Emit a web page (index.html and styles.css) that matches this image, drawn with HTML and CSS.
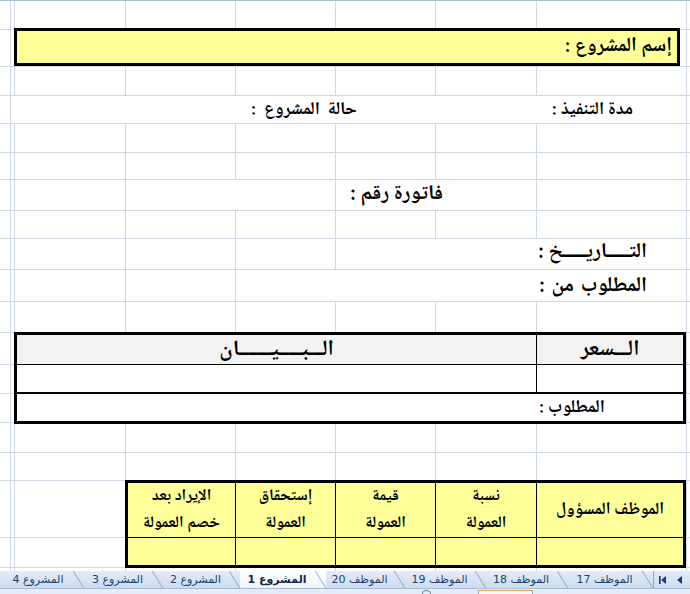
FILE: index.html
```html
<!DOCTYPE html>
<html lang="ar" dir="rtl">
<head>
<meta charset="utf-8">
<title>فاتورة المشروع</title>
<link rel="stylesheet" href="styles.css">
</head>
<body>
<div class="window">
  <div class="sheet">
    <!-- r1 -->
    <div class="row h29"><div class="c"></div><div class="c"></div><div class="c"></div><div class="c"></div><div class="c"></div><div class="c"></div><div class="c"></div><div class="c"></div><div class="c ch"></div></div>
    <!-- r2: project name -->
    <div class="row h37"><div class="c"></div><div class="c sp6 boxcell"><div class="titlebox">إسم المشروع :</div></div><div class="c"></div><div class="c ch"></div></div>
    <!-- r3 -->
    <div class="row h29"><div class="c"></div><div class="c"></div><div class="c"></div><div class="c"></div><div class="c"></div><div class="c"></div><div class="c"></div><div class="c"></div><div class="c ch"></div></div>
    <!-- r4 -->
    <div class="row h28"><div class="c"></div><div class="c sp6 line4"><span class="lbl l-dur">مدة التنفيذ :</span><span class="lbl l-state">حالة المشروع :</span></div><div class="c"></div><div class="c ch"></div></div>
    <!-- r5 -->
    <div class="row h29"><div class="c"></div><div class="c"></div><div class="c"></div><div class="c"></div><div class="c"></div><div class="c"></div><div class="c"></div><div class="c"></div><div class="c ch"></div></div>
    <!-- r6 -->
    <div class="row h27"><div class="c"></div><div class="c"></div><div class="c"></div><div class="c"></div><div class="c"></div><div class="c"></div><div class="c"></div><div class="c"></div><div class="c ch"></div></div>
    <!-- r7: invoice number -->
    <div class="row h31"><div class="c"></div><div class="c"></div><div class="c sp2 inv"><span class="lbl l-inv">فاتورة رقم :</span></div><div class="c sp2"></div><div class="c"></div><div class="c"></div><div class="c ch"></div></div>
    <!-- r8 -->
    <div class="row h28"><div class="c"></div><div class="c"></div><div class="c"></div><div class="c"></div><div class="c"></div><div class="c"></div><div class="c"></div><div class="c"></div><div class="c ch"></div></div>
    <!-- r9: date -->
    <div class="row h31"><div class="c"></div><div class="c sp3 side up"><span class="lbl l-big">التـــــاريـــــخ :</span></div><div class="c"></div><div class="c"></div><div class="c"></div><div class="c"></div><div class="c ch"></div></div>
    <!-- r10: requested from -->
    <div class="row h32"><div class="c"></div><div class="c sp4 side down"><span class="lbl l-big l-from">المطلوب من :</span></div><div class="c"></div><div class="c"></div><div class="c"></div><div class="c ch"></div></div>
    <!-- r11 -->
    <div class="row h31"><div class="c"></div><div class="c"></div><div class="c"></div><div class="c"></div><div class="c"></div><div class="c"></div><div class="c"></div><div class="c"></div><div class="c ch"></div></div>

    <!-- r12-r14: price / description table -->
    <div class="row grp1">
      <div class="tbl1">
        <div class="t1-head">
          <div class="k1">الـــسعر</div>
          <div class="k2">الـــبـــــيـــــــان</div>
        </div>
        <div class="t1-row"><div class="k1"></div><div class="k2"></div></div>
        <div class="t1-foot"><div class="due">المطلوب :</div></div>
      </div>
      <div class="c"></div><div class="c"></div><div class="c ch"></div>
      <div class="c"></div><div class="c"></div><div class="c ch"></div>
      <div class="c"></div><div class="c"></div><div class="c ch"></div>
    </div>

    <!-- r15 -->
    <div class="row h30"><div class="c"></div><div class="c"></div><div class="c"></div><div class="c"></div><div class="c"></div><div class="c"></div><div class="c"></div><div class="c"></div><div class="c ch"></div></div>
    <!-- r16 -->
    <div class="row h28"><div class="c"></div><div class="c"></div><div class="c"></div><div class="c"></div><div class="c"></div><div class="c"></div><div class="c"></div><div class="c"></div><div class="c ch"></div></div>

    <!-- r17-r18: commission table -->
    <div class="row grp2">
      <div class="tbl2">
        <div class="t2-head">
          <div class="hc one">الموظف المسؤول</div>
          <div class="hc"><span class="ln">نسبة</span><span class="ln">العمولة</span></div>
          <div class="hc"><span class="ln">قيمة</span><span class="ln">العمولة</span></div>
          <div class="hc"><span class="ln">إستحقاق</span><span class="ln">العمولة</span></div>
          <div class="hc"><span class="ln">الإيراد بعد</span><span class="ln">خصم العمولة</span></div>
        </div>
        <div class="t2-row">
          <div class="hc"></div><div class="hc"></div><div class="hc"></div><div class="hc"></div><div class="hc"></div>
        </div>
      </div>
      <div class="c"></div><div class="c"></div><div class="c"></div><div class="c ch"></div>
      <div class="c"></div><div class="c"></div><div class="c"></div><div class="c ch"></div>
    </div>

    <!-- r19 -->
    <div class="row h30"><div class="c"></div><div class="c"></div><div class="c"></div><div class="c"></div><div class="c"></div><div class="c"></div><div class="c"></div><div class="c"></div><div class="c ch"></div></div>
  </div>

  <div class="tabbar">
    <div class="tabrow">
      <div class="nav">
        <svg class="ic" width="5" height="8" viewBox="0 0 5 8"><path d="M5 0L0 4L5 8Z"/></svg>
        <svg class="ic" width="7" height="8" viewBox="0 0 7 8"><rect x="0" y="0" width="1.6" height="8"/><path d="M7 0L2 4L7 8Z"/></svg>
      </div>
      <div class="tab w85">الموظف 17</div>
      <div class="tab w82">الموظف 18</div>
      <div class="tab w81">الموظف 19</div>
      <div class="tab w79">الموظف 20</div>
      <div class="tab w86 active">المشروع 1</div>
      <div class="tab w77">المشروع 2</div>
      <div class="tab w79">المشروع 3</div>
      <div class="tab w80">المشروع 4</div>
    </div>
    <div class="status">
      <div class="sgap"></div>
      <div class="knob"></div>
      <div class="dot"></div>
    </div>
  </div>
</div>
</body>
</html>
```

FILE: styles.css
```css
* { box-sizing: border-box; margin: 0; padding: 0; }

html, body {
  width: 690px;
  height: 594px;
  overflow: hidden;
  background: #ffffff;
}

body {
  font-family: "Noto Naskh Arabic", "Noto Sans Arabic", "DejaVu Sans", sans-serif;
  color: #000;
}

.window {
  width: 690px;
  height: 594px;
  display: flex;
  flex-direction: column;
}

/* ---------- worksheet ---------- */
.sheet {
  height: 571px;
  flex: none;
  overflow: hidden;
  border-top: 1px solid #a9bdd8;
}

.row {
  display: grid;
  /* right to left: spare, A, B, C, D, E, F, G, H */
  grid-template-columns: 4px 150px 101px 100px 100px 110px 111px 4px 10px;
}

.h27 { height: 27px; }
.h28 { height: 28px; }
.h29 { height: 29px; }
.h30 { height: 30px; }
.h31 { height: 31px; }
.h32 { height: 32px; }
.h37 { height: 37px; }

.c {
  border-left: 1px solid #d0d7e5;
  border-bottom: 1px solid #d0d7e5;
}
.c.ch { border-left: none; }

.sp2 { grid-column: span 2; }
.sp3 { grid-column: span 3; }
.sp4 { grid-column: span 4; }
.sp6 { grid-column: span 6; }

.lbl {
  font-weight: bold;
  white-space: nowrap;
  line-height: 1;
}

/* project name box */
.boxcell { border-left: none; }
.titlebox {
  height: 38px;
  margin-top: -2px;
  margin-right: 6px;
  background: #ffff99;
  border: 3px solid #000;
  font-weight: bold;
  font-size: 20px;
  line-height: 1;
  display: flex;
  align-items: center;
  padding-right: 5px;
  white-space: nowrap;
}

/* duration / state line */
.line4 {
  border-left: none;
  display: flex;
  align-items: center;
}
.l-dur {
  width: 150px;
  padding-right: 53px;
  font-size: 18px;
}
.l-state {
  margin-right: 179px;
  font-size: 18px;
  word-spacing: 4px;
}

/* invoice number */
.inv {
  display: flex;
  align-items: center;
  padding-right: 93px;
  padding-bottom: 2px;
}
.l-inv { font-size: 21px; }

/* date / requested from */
.side {
  display: flex;
  align-items: center;
  padding-right: 39px;
}
.side.up { padding-bottom: 3px; }
.side.down { padding-top: 2px; }
.l-big { font-size: 21px; }
.l-from { word-spacing: 2px; }

/* ---------- price table ---------- */
.grp1 {
  grid-template-rows: 32px 29px 29px;
}
.tbl1 {
  grid-column: 2 / 8;
  grid-row: 1 / 4;
  align-self: start;
  height: 92px;
  margin-top: -1px;
  border: 3px solid #000;
  background: #fff;
  display: flex;
  flex-direction: column;
  position: relative;
  z-index: 1;
}
.t1-head, .t1-row, .t1-foot {
  display: grid;
  grid-template-columns: 147px 1fr;
}
.t1-head {
  height: 30px;
  background: #f2f2f2;
  border-bottom: 1px solid #000;
  font-weight: bold;
  font-size: 22px;
  line-height: 1;
}
.t1-head .k1, .t1-head .k2 {
  display: flex;
  align-items: center;
  justify-content: center;
}
.k1 { border-left: 1px solid #000; }
.t1-row {
  height: 29px;
  border-bottom: 2px solid #000;
}
.t1-foot {
  flex: 1;
}
.due {
  display: flex;
  align-items: center;
  justify-content: flex-end;
  padding-left: 3px;
  font-weight: bold;
  font-size: 18px;
  line-height: 1;
}

/* ---------- commission table ---------- */
.grp2 {
  grid-template-rows: 57px 30px;
}
.tbl2 {
  grid-column: 2 / 7;
  grid-row: 1 / 3;
  align-self: start;
  height: 88px;
  margin-top: -1px;
  border: 3px solid #000;
  background: #ffff99;
  display: flex;
  flex-direction: column;
  position: relative;
  z-index: 1;
}
.t2-head, .t2-row {
  display: grid;
  grid-template-columns: 147px 101px 100px 100px 1fr;
}
.t2-head {
  height: 55px;
  border-bottom: 1px solid #000;
}
.t2-row { flex: 1; }
.hc {
  border-left: 1px solid #000;
  display: flex;
  flex-direction: column;
  align-items: center;
  justify-content: center;
  gap: 11px;
  text-align: center;
  font-weight: bold;
  font-size: 16px;
  line-height: 1;
  white-space: nowrap;
}
.hc.one { font-size: 17px; }
.hc:last-child { border-left: none; }
.ln { display: block; }

/* ---------- sheet tabs ---------- */
.tabbar {
  flex: 1;
  display: flex;
  flex-direction: column;
  background: #d7e3f2;
}
.tabrow {
  height: 17px;
  display: flex;
  background: linear-gradient(#e3ebf6, #cddcef);
}
.nav {
  width: 37px;
  flex: none;
  display: flex;
  align-items: center;
  gap: 11px;
  padding-right: 8px;
  border-left: 1px solid #8fa8c9;
}
.ic { fill: #1d3b70; display: block; }

.tab {
  position: relative;
  flex: none;
  display: flex;
  align-items: center;
  justify-content: center;
  padding-right: 12px;
  font-family: "DejaVu Sans", sans-serif;
  font-size: 11px;
  color: #233f6e;
  white-space: nowrap;
}
.tab::before {
  content: "";
  position: absolute;
  top: 0;
  bottom: 0;
  right: 5px;
  width: 1px;
  background: #8ea5c6;
  transform: skewX(32deg);
}
.tab.active {
  background: linear-gradient(#ffffff, #eef3fa);
  font-weight: bold;
  color: #14294d;
}
.w77 { width: 77px; }
.w79 { width: 79px; }
.w80 { width: 80px; }
.w81 { width: 81px; }
.w82 { width: 82px; }
.w85 { width: 85px; }
.w86 { width: 86px; }

.status {
  flex: 1;
  display: flex;
  align-items: flex-start;
  border-top: 1px solid #a8bcd8;
  background: #e4ecf7;
}
.sgap { width: 157px; flex: none; }
.knob {
  width: 55px;
  height: 5px;
  border: 1px solid #9aa9bd;
  border-top-color: #e0a64a;
  background: #f4f6f9;
  margin-top: 1px;
}
.dot {
  width: 9px;
  height: 5px;
  margin-right: 47px;
  border: 1px solid #6d7f99;
  border-bottom: none;
  border-radius: 5px 5px 0 0;
  margin-top: 1px;
}
```
